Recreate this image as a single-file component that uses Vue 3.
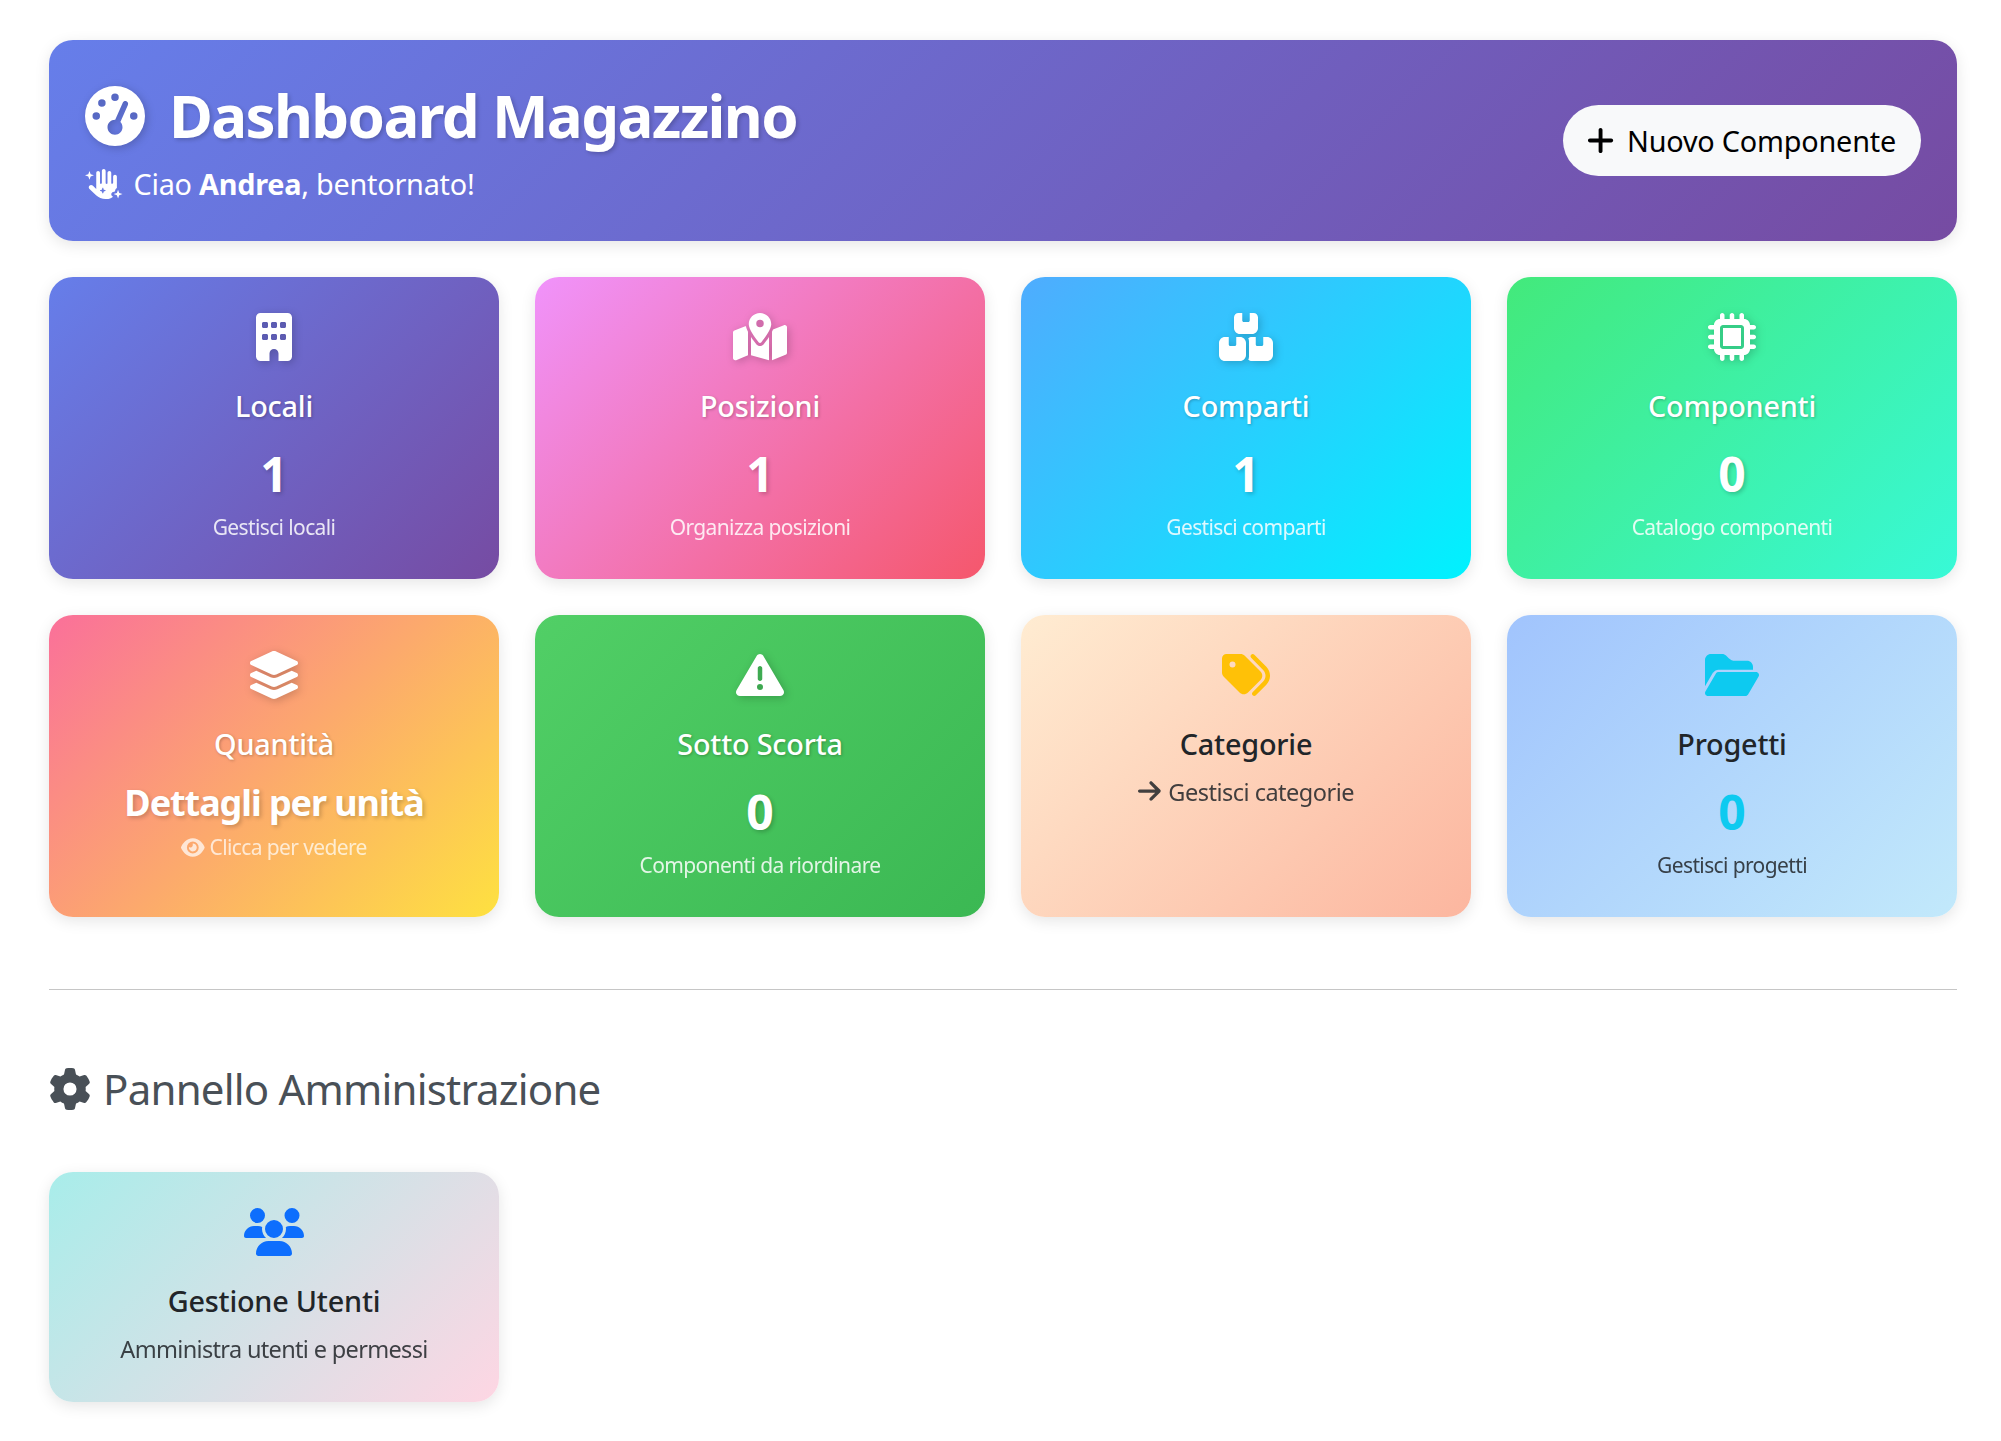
<script setup>
const icons = {
  building: { w: 384, d: 'M48 0C21.5 0 0 21.5 0 48V464c0 26.5 21.5 48 48 48h96V432c0-26.5 21.5-48 48-48s48 21.5 48 48v80h96c26.5 0 48-21.5 48-48V48c0-26.5-21.5-48-48-48H48zM64 240c0-8.8 7.2-16 16-16h32c8.8 0 16 7.2 16 16v32c0 8.8-7.2 16-16 16H80c-8.8 0-16-7.2-16-16V240zm112-16h32c8.8 0 16 7.2 16 16v32c0 8.8-7.2 16-16 16H176c-8.8 0-16-7.2-16-16V240c0-8.8 7.2-16 16-16zm80 16c0-8.8 7.2-16 16-16h32c8.8 0 16 7.2 16 16v32c0 8.8-7.2 16-16 16H272c-8.8 0-16-7.2-16-16V240zM80 96h32c8.8 0 16 7.2 16 16v32c0 8.8-7.2 16-16 16H80c-8.8 0-16-7.2-16-16V112c0-8.8 7.2-16 16-16zm80 16c0-8.8 7.2-16 16-16h32c8.8 0 16 7.2 16 16v32c0 8.8-7.2 16-16 16H176c-8.8 0-16-7.2-16-16V112zM272 96h32c8.8 0 16 7.2 16 16v32c0 8.8-7.2 16-16 16H272c-8.8 0-16-7.2-16-16V112c0-8.8 7.2-16 16-16z' },
  map: { w: 576, d: 'M408 120c0 54.6-73.1 151.9-105.2 192c-7.7 9.6-22 9.6-29.6 0C241.1 271.9 168 174.6 168 120C168 53.7 221.7 0 288 0s120 53.7 120 120zm8 80.4c3.5-6.9 6.7-13.8 9.6-20.6c.5-1.2 1-2.5 1.5-3.7l116-46.4C558.9 123.4 576 135 576 152V422.8c0 9.8-6 18.6-15.1 22.3L416 503V200.4zM137.6 138.3c2.4 14.1 7.2 28.3 12.8 41.5c2.9 6.8 6.1 13.7 9.6 20.6V451.8L32.9 502.7C17.1 509 0 497.4 0 480.4V209.6c0-9.8 6-18.6 15.1-22.3l122.6-49zM327.8 332c13.9-17.4 35.7-45.7 56.2-77V504.3L192 449.4V255c20.5 31.3 42.3 59.6 56.2 77c20.5 25.6 59.1 25.6 79.6 0zM288 152a40 40 0 1 0 0-80 40 40 0 1 0 0 80z' },
  boxes: { w: 576, d: 'M248 0H208c-26.5 0-48 21.5-48 48V160c0 35.3 28.7 64 64 64H352c35.3 0 64-28.7 64-64V48c0-26.5-21.5-48-48-48H328V80c0 8.8-7.2 16-16 16H264c-8.8 0-16-7.2-16-16V0zM64 256c-35.3 0-64 28.7-64 64V448c0 35.3 28.7 64 64 64H224c35.3 0 64-28.7 64-64V320c0-35.3-28.7-64-64-64H184v80c0 8.8-7.2 16-16 16H120c-8.8 0-16-7.2-16-16V256H64zM352 512H512c35.3 0 64-28.7 64-64V320c0-35.3-28.7-64-64-64H472v80c0 8.8-7.2 16-16 16H408c-8.8 0-16-7.2-16-16V256H352c-15 0-28.8 5.1-39.7 13.8c4.9 10.4 7.7 22 7.7 34.2V464c0 12.2-2.8 23.8-7.7 34.2C323.2 506.9 337 512 352 512z' },
  chip: { w: 512, d: 'M176 24c0-13.3-10.7-24-24-24s-24 10.7-24 24V64c-35.3 0-64 28.7-64 64H24c-13.3 0-24 10.7-24 24s10.7 24 24 24H64v56H24c-13.3 0-24 10.7-24 24s10.7 24 24 24H64v56H24c-13.3 0-24 10.7-24 24s10.7 24 24 24H64c0 35.3 28.7 64 64 64v40c0 13.3 10.7 24 24 24s24-10.7 24-24V448h56v40c0 13.3 10.7 24 24 24s24-10.7 24-24V448h56v40c0 13.3 10.7 24 24 24s24-10.7 24-24V448c35.3 0 64-28.7 64-64h40c13.3 0 24-10.7 24-24s-10.7-24-24-24H448V280h40c13.3 0 24-10.7 24-24s-10.7-24-24-24H448V176h40c13.3 0 24-10.7 24-24s-10.7-24-24-24H448c0-35.3-28.7-64-64-64V24c0-13.3-10.7-24-24-24s-24 10.7-24 24V64H280V24c0-13.3-10.7-24-24-24s-24 10.7-24 24V64H176V24zM160 128H352c17.7 0 32 14.3 32 32V352c0 17.7-14.3 32-32 32H160c-17.7 0-32-14.3-32-32V160c0-17.7 14.3-32 32-32zm192 32H160V352H352V160z' },
  layers: { w: 576, d: 'M264.5 5.2c14.9-6.9 32.1-6.9 47 0l218.6 101c8.5 3.9 13.9 12.4 13.9 21.8s-5.4 17.9-13.9 21.8l-218.6 101c-14.9 6.9-32.1 6.9-47 0L45.9 149.8C37.4 145.8 32 137.3 32 128s5.4-17.9 13.9-21.8L264.5 5.2zM476.9 209.6l53.2 24.6c8.5 3.9 13.9 12.4 13.9 21.8s-5.4 17.9-13.9 21.8l-218.6 101c-14.9 6.9-32.1 6.9-47 0L45.9 277.8C37.4 273.8 32 265.3 32 256s5.4-17.9 13.9-21.8l53.2-24.6 152 70.2c23.4 10.8 50.4 10.8 73.8 0l152-70.2zm-152 198.2l152-70.2 53.2 24.6c8.5 3.9 13.9 12.4 13.9 21.8s-5.4 17.9-13.9 21.8l-218.6 101c-14.9 6.9-32.1 6.9-47 0L45.9 405.8C37.4 401.8 32 393.3 32 384s5.4-17.9 13.9-21.8l53.2-24.6 152 70.2c23.4 10.8 50.4 10.8 73.8 0z' },
  warn: { w: 512, d: 'M256 32c14.2 0 27.3 7.5 34.5 19.8l216 368c7.3 12.4 7.3 27.7 .2 40.1S486.3 480 472 480H40c-14.3 0-27.6-7.7-34.7-20.1s-7-27.8 .2-40.1l216-368C228.7 39.5 241.8 32 256 32zm0 128c-13.3 0-24 10.7-24 24V296c0 13.3 10.7 24 24 24s24-10.7 24-24V184c0-13.3-10.7-24-24-24zm32 224a32 32 0 1 0 -64 0 32 32 0 1 0 64 0z' },
  tags: { w: 512, d: 'M345 39.1L472.8 168.4c52.4 53 52.4 138.2 0 191.2L360.8 472.9c-9.3 9.4-24.5 9.5-33.9 .2s-9.5-24.5-.2-33.9L438.6 325.9c33.9-34.3 33.9-89.4 0-123.7L310.9 72.9c-9.3-9.4-9.2-24.6 .2-33.9s24.6-9.2 33.9 .2zM0 229.5V80C0 53.5 21.5 32 48 32H197.5c17 0 33.3 6.7 45.3 18.7l168 168c25 25 25 65.5 0 90.5L277.3 442.7c-25 25-65.5 25-90.5 0l-168-168C6.7 262.7 0 246.5 0 229.5zM144 144a32 32 0 1 0 -64 0 32 32 0 1 0 64 0z' },
  folder: { w: 576, d: 'M88.7 223.8L0 375.8V96C0 60.7 28.7 32 64 32H181.5c17 0 33.3 6.7 45.3 18.7l26.5 26.5c18 18 42.4 28.1 67.9 28.1H448c35.3 0 64 28.7 64 64v32H144c-22.8 0-43.8 12.1-55.3 31.8zm27.6 16.1C122.1 230 132.6 224 144 224H544c11.5 0 22 6.1 27.7 16.1s5.7 22.2-.1 32.1l-112 192C453.9 474 443.4 480 432 480H32c-11.5 0-22-6.1-27.7-16.1s-5.7-22.2 .1-32.1l112-192z' },
  users: { w: 640, d: 'M144 0a80 80 0 1 1 0 160A80 80 0 1 1 144 0zM512 0a80 80 0 1 1 0 160A80 80 0 1 1 512 0zM0 298.7C0 239.8 47.8 192 106.7 192h42.7c15.9 0 31 3.5 44.6 9.7c-1.3 7.2-1.9 14.7-1.9 22.3c0 38.2 16.8 72.5 43.3 96c-.2 0-.4 0-.7 0H21.3C9.6 320 0 310.4 0 298.7zM405.3 320c-.2 0-.4 0-.7 0c26.6-23.5 43.3-57.8 43.3-96c0-7.6-.7-15-1.9-22.3c13.6-6.3 28.7-9.7 44.6-9.7h42.7C592.2 192 640 239.8 640 298.7c0 11.8-9.6 21.3-21.3 21.3H405.3zM224 224a96 96 0 1 1 192 0 96 96 0 1 1 -192 0zM128 485.3C128 411.7 187.7 352 261.3 352H378.7C452.3 352 512 411.7 512 485.3c0 14.7-11.9 26.7-26.7 26.7H154.7c-14.7 0-26.7-11.9-26.7-26.7z' },
  gauge: { w: 512, d: 'M0 256a256 256 0 1 1 512 0A256 256 0 1 1 0 256zM288 96a32 32 0 1 0 -64 0 32 32 0 1 0 64 0zM256 416c35.3 0 64-28.7 64-64c0-17.4-6.9-33.1-18.1-44.6L366 161.7c5.3-12.1-.2-26.3-12.3-31.6s-26.3 .2-31.6 12.3L257.9 288c-.6 0-1.3 0-1.9 0c-35.3 0-64 28.7-64 64s28.7 64 64 64zM176 144a32 32 0 1 0 -64 0 32 32 0 1 0 64 0zM96 288a32 32 0 1 0 0-64 32 32 0 1 0 0 64zm352-32a32 32 0 1 0 -64 0 32 32 0 1 0 64 0z' },
  hand: { w: 640, d: 'M320 0c17.7 0 32 14.3 32 32V240c0 8.8 7.2 16 16 16s16-7.2 16-16V64c0-17.7 14.3-32 32-32s32 14.3 32 32V240c0 8.8 7.2 16 16 16s16-7.2 16-16V128c0-17.7 14.3-32 32-32s32 14.3 32 32V323.1c-11.9 4.8-21.3 14.9-25 27.8l-8.9 31.2L478.9 391C460.6 396.3 448 413 448 432c0 18.9 12.5 35.6 30.6 40.9C448.4 497.4 409.9 512 368 512H348.8c-59.6 0-116.9-22.9-160-64L76.4 341c-16-15.2-16.6-40.6-1.4-56.6s40.6-16.6 56.6-1.4l60.5 57.6c0-1.5-.1-3.1-.1-4.6V64c0-17.7 14.3-32 32-32s32 14.3 32 32V240c0 8.8 7.2 16 16 16s16-7.2 16-16V32c0-17.7 14.3-32 32-32zm-7.3 326.6c-1.1-3.9-4.7-6.6-8.7-6.6s-7.6 2.7-8.7 6.6L288 352l-25.4 7.3c-3.9 1.1-6.6 4.7-6.6 8.7s2.7 7.6 6.6 8.7L288 384l7.3 25.4c1.1 3.9 4.7 6.6 8.7 6.6s7.6-2.7 8.7-6.6L320 384l25.4-7.3c3.9-1.1 6.6-4.7 6.6-8.7s-2.7-7.6-6.6-8.7L320 352l-7.3-25.4zM96 88l56 20-56 20-20 56-20-56L0 108l56-20 20-56 20 56zM584 408l56 20-56 20-20 56-20-56-56-20 56-20 20-56 20 56z' },
  plus: { w: 448, d: 'M256 80c0-17.7-14.3-32-32-32s-32 14.3-32 32V224H48c-17.7 0-32 14.3-32 32s14.3 32 32 32H192V432c0 17.7 14.3 32 32 32s32-14.3 32-32V288H400c17.7 0 32-14.3 32-32s-14.3-32-32-32H256V80z' },
  eye: { w: 576, d: 'M288 32c-80.8 0-145.5 36.8-192.6 80.6C48.6 156 17.3 208 2.5 243.7c-3.3 7.9-3.3 16.7 0 24.6C17.3 304 48.6 356 95.4 399.4C142.5 443.2 207.2 480 288 480s145.5-36.8 192.6-80.6c46.8-43.5 78.1-95.4 93-131.1c3.3-7.9 3.3-16.7 0-24.6c-14.9-35.7-46.2-87.7-93-131.1C433.5 68.8 368.8 32 288 32zM144 256a144 144 0 1 1 288 0 144 144 0 1 1 -288 0zm144-64c0 35.3-28.7 64-64 64c-7.1 0-13.9-1.2-20.3-3.3c-5.5-1.8-11.9 1.6-11.7 7.4c.3 6.9 1.3 13.8 3.2 20.7c13.7 51.2 66.4 81.6 117.6 67.9s81.6-66.4 67.9-117.6c-11.1-41.5-47.8-69.4-88.6-71.1c-5.8-.2-9.2 6.1-7.4 11.7c2.1 6.4 3.3 13.2 3.3 20.3z' },
  arrow: { w: 448, d: 'M438.6 278.6c12.5-12.5 12.5-32.8 0-45.3l-160-160c-12.5-12.5-32.8-12.5-45.3 0s-12.5 32.8 0 45.3L338.8 224 32 224c-17.7 0-32 14.3-32 32s14.3 32 32 32l306.7 0L233.4 393.4c-12.5 12.5-12.5 32.8 0 45.3s32.8 12.5 45.3 0l160-160z' },
  gear: { w: 512, d: 'M495.9 166.6c3.2 8.7 .5 18.4-6.4 24.6l-43.3 39.4c1.1 8.3 1.7 16.8 1.7 25.4s-.6 17.1-1.7 25.4l43.3 39.4c6.9 6.2 9.6 15.9 6.4 24.6c-4.4 11.9-9.7 23.3-15.8 34.3l-4.7 8.1c-6.6 11-14 21.4-22.1 31.2c-5.9 7.2-15.7 9.6-24.5 6.8l-55.7-17.7c-13.4 10.3-28.2 18.9-44 25.4l-12.5 57.1c-2 9.1-9 16.3-18.2 17.8c-13.8 2.3-28 3.5-42.5 3.5s-28.7-1.2-42.5-3.5c-9.2-1.5-16.2-8.7-18.2-17.8l-12.5-57.1c-15.8-6.5-30.6-15.1-44-25.4L83.1 425.9c-8.8 2.8-18.6 .3-24.5-6.8c-8.1-9.8-15.5-20.2-22.1-31.2l-4.7-8.1c-6.1-11-11.4-22.4-15.8-34.3c-3.2-8.7-.5-18.4 6.4-24.6l43.3-39.4C64.6 273.1 64 264.6 64 256s.6-17.1 1.7-25.4L22.4 191.2c-6.9-6.2-9.6-15.9-6.4-24.6c4.4-11.9 9.7-23.3 15.8-34.3l4.7-8.1c6.6-11 14-21.4 22.1-31.2c5.9-7.2 15.7-9.6 24.5-6.8l55.7 17.7c13.4-10.3 28.2-18.9 44-25.4l12.5-57.1c2-9.1 9-16.3 18.2-17.8C227.3 1.2 241.5 0 256 0s28.7 1.2 42.5 3.5c9.2 1.5 16.2 8.7 18.2 17.8l12.5 57.1c15.8 6.5 30.6 15.1 44 25.4l55.7-17.7c8.8-2.8 18.6-.3 24.5 6.8c8.1 9.8 15.5 20.2 22.1 31.2l4.7 8.1c6.1 11 11.4 22.4 15.8 34.3zM256 336a80 80 0 1 0 0-160 80 80 0 1 0 0 160z' },
};

const cards = [
  { cls: 'c-locali', icon: 'building', title: 'Locali', value: '1', sub: 'Gestisci locali' },
  { cls: 'c-posizioni', icon: 'map', title: 'Posizioni', value: '1', sub: 'Organizza posizioni' },
  { cls: 'c-comparti', icon: 'boxes', title: 'Comparti', value: '1', sub: 'Gestisci comparti' },
  { cls: 'c-componenti', icon: 'chip', title: 'Componenti', value: '0', sub: 'Catalogo componenti' },
  { cls: 'c-quantita', icon: 'layers', title: 'Quantità', text: 'Dettagli per unità', sub: 'Clicca per vedere', subIcon: 'eye' },
  { cls: 'c-scorta', icon: 'warn', title: 'Sotto Scorta', value: '0', sub: 'Componenti da riordinare' },
  { cls: 'c-categorie dark', icon: 'tags', title: 'Categorie', sub: 'Gestisci categorie', subIcon: 'arrow' },
  { cls: 'c-progetti dark', icon: 'folder', title: 'Progetti', value: '0', sub: 'Gestisci progetti' },
];
</script>

<template>
  <div class="page">
    <header class="hero">
      <div>
        <h1>
          <svg class="ico" :viewBox="`0 0 ${icons.gauge.w} 512`"><path :d="icons.gauge.d" /></svg>
          Dashboard Magazzino
        </h1>
        <p class="hello">
          <svg class="ico" :viewBox="`0 0 ${icons.hand.w} 512`"><path :d="icons.hand.d" /></svg>
          <span>Ciao <strong>Andrea</strong>, bentornato!</span>
        </p>
      </div>
      <button class="new-btn">
        <svg class="ico" :viewBox="`0 0 ${icons.plus.w} 512`"><path :d="icons.plus.d" /></svg>
        Nuovo Componente
      </button>
    </header>

    <section class="grid">
      <div v-for="c in cards" :key="c.title" class="card" :class="c.cls">
        <svg class="ico card-ico" :viewBox="`0 0 ${icons[c.icon].w} 512`"><path :d="icons[c.icon].d" /></svg>
        <h5>{{ c.title }}</h5>
        <div v-if="c.value" class="value">{{ c.value }}</div>
        <div v-if="c.text" class="text">{{ c.text }}</div>
        <p class="sub">
          <svg v-if="c.subIcon" class="ico" :viewBox="`0 0 ${icons[c.subIcon].w} 512`"><path :d="icons[c.subIcon].d" /></svg>
          {{ c.sub }}
        </p>
      </div>
    </section>

    <hr />

    <h3 class="admin-title">
      <svg class="ico" viewBox="0 0 512 512"><path :d="icons.gear.d" /></svg>
      Pannello Amministrazione
    </h3>

    <section class="grid admin-grid">
      <div class="card c-admin dark">
        <svg class="ico card-ico" viewBox="0 0 640 512"><path :d="icons.users.d" /></svg>
        <h5>Gestione Utenti</h5>
        <p class="sub">Amministra utenti e permessi</p>
      </div>
    </section>
  </div>
</template>

<style>
body {
  background: #fff;
}
</style>

<style scoped>
.page {
  padding: 40px 44px 39px 49px;
  font-family: "Noto Sans", "Open Sans", sans-serif;
  color: #212529;
}

.ico {
  height: 1em;
  width: auto;
  fill: currentColor;
  vertical-align: -0.125em;
}

.hero {
  display: flex;
  justify-content: space-between;
  align-items: center;
  height: 201px;
  box-sizing: border-box;
  padding: 0 36px;
  border-radius: 24px;
  background: linear-gradient(135deg, #667eea, #764ba2);
  color: #fff;
  box-shadow: 0 4px 15px rgba(0, 0, 0, .1);
}

h1 {
  margin: 0 0 15px;
  font-size: 60px;
  line-height: 72px;
  font-weight: 700;
  letter-spacing: -1.65px;
  text-shadow: 2px 2px 4px rgba(0, 0, 0, .2);
}

h1 .ico {
  margin-right: 10px;
  filter: drop-shadow(2px 2px 4px rgba(0, 0, 0, .2));
}

.hello {
  margin: 0;
  font-size: 28.8px;
  line-height: 36px;
  font-weight: 400;
  letter-spacing: -.23px;
}

.hello .ico {
  height: 30px;
  margin-right: 11px;
}

.new-btn {
  display: flex;
  align-items: center;
  gap: 13px;
  height: 71px;
  padding: 0 25px 0 24px;
  border: none;
  border-radius: 36px;
  background: #f8f9fa;
  color: #000;
  font-family: inherit;
  font-size: 28.8px;
  letter-spacing: -.2px;
}

.new-btn .ico {
  height: 31px;
}

.grid {
  display: grid;
  grid-template-columns: repeat(4, 450px);
  gap: 36px;
  margin-top: 36px;
}

.admin-grid {
  margin-top: 55px;
}

.card {
  box-sizing: border-box;
  min-height: 302px;
  padding: 36px 20px;
  border-radius: 24px;
  text-align: center;
  color: #fff;
  box-shadow: 0 4px 15px rgba(0, 0, 0, .1);
}

.card-ico {
  display: block;
  height: 48px;
  margin: 0 auto;
  filter: drop-shadow(2px 2px 4px rgba(0, 0, 0, .2));
}

h5 {
  margin: 27px 0 0;
  font-size: 28.8px;
  line-height: 36px;
  font-weight: 500;
  letter-spacing: -.2px;
  text-shadow: 1px 1px 3px rgba(0, 0, 0, .25);
}

.value {
  margin-top: 21px;
  font-size: 48px;
  line-height: 58px;
  font-weight: 700;
  text-shadow: 2px 2px 4px rgba(0, 0, 0, .2);
}

.text {
  margin-top: 19px;
  font-size: 36px;
  line-height: 44px;
  font-weight: 700;
  letter-spacing: -1.08px;
  text-shadow: 2px 2px 4px rgba(0, 0, 0, .2);
}

.sub {
  margin: 8px 0 0;
  font-size: 21px;
  line-height: 32px;
  letter-spacing: -.62px;
  opacity: .85;
}

.c-quantita .sub {
  margin-top: 6px;
  opacity: .72;
}

.c-categorie .sub {
  margin-top: 12px;
  font-size: 23.5px;
  line-height: 36px;
  letter-spacing: -.5px;
}

.c-categorie .sub .ico {
  height: 26px;
  margin-right: 2px;
}

.c-admin .sub {
  margin-top: 12px;
  font-size: 23.5px;
  line-height: 36px;
  letter-spacing: -.66px;
}

.dark {
  color: #212529;
}

.dark h5,
.dark .card-ico {
  text-shadow: none;
  filter: none;
}

.c-locali { background: linear-gradient(135deg, #667eea, #764ba2); }
.c-posizioni { background: linear-gradient(135deg, #f093fb, #f5576c); }
.c-comparti { background: linear-gradient(135deg, #4facfe, #00f2fe); }
.c-componenti { background: linear-gradient(135deg, #43e97b, #38f9d7); }
.c-quantita { background: linear-gradient(135deg, #fa709a, #fee140); }
.c-scorta { background: linear-gradient(135deg, #51cf66, #3bb853); }
.c-categorie { background: linear-gradient(135deg, #ffecd2, #fcb69f); }
.c-progetti { background: linear-gradient(135deg, #a1c4fd, #c2e9fb); }
.c-admin { background: linear-gradient(135deg, #a8edea, #fed6e3); min-height: 230px; padding-bottom: 35px; }

.c-categorie .card-ico { color: #ffc107; }
.c-progetti .card-ico,
.c-progetti .value { color: #0dcaf0; text-shadow: none; }
.c-admin .card-ico { color: #0d6efd; }

hr {
  height: 1px;
  margin: 72px 0 0;
  border: none;
  background: #c6c6c6;
}

.admin-title {
  margin: 71px 0 0;
  font-size: 42px;
  line-height: 56px;
  font-weight: 400;
  letter-spacing: -.8px;
  color: #495057;
}

.admin-title .ico {
  margin-right: 2px;
}
</style>
